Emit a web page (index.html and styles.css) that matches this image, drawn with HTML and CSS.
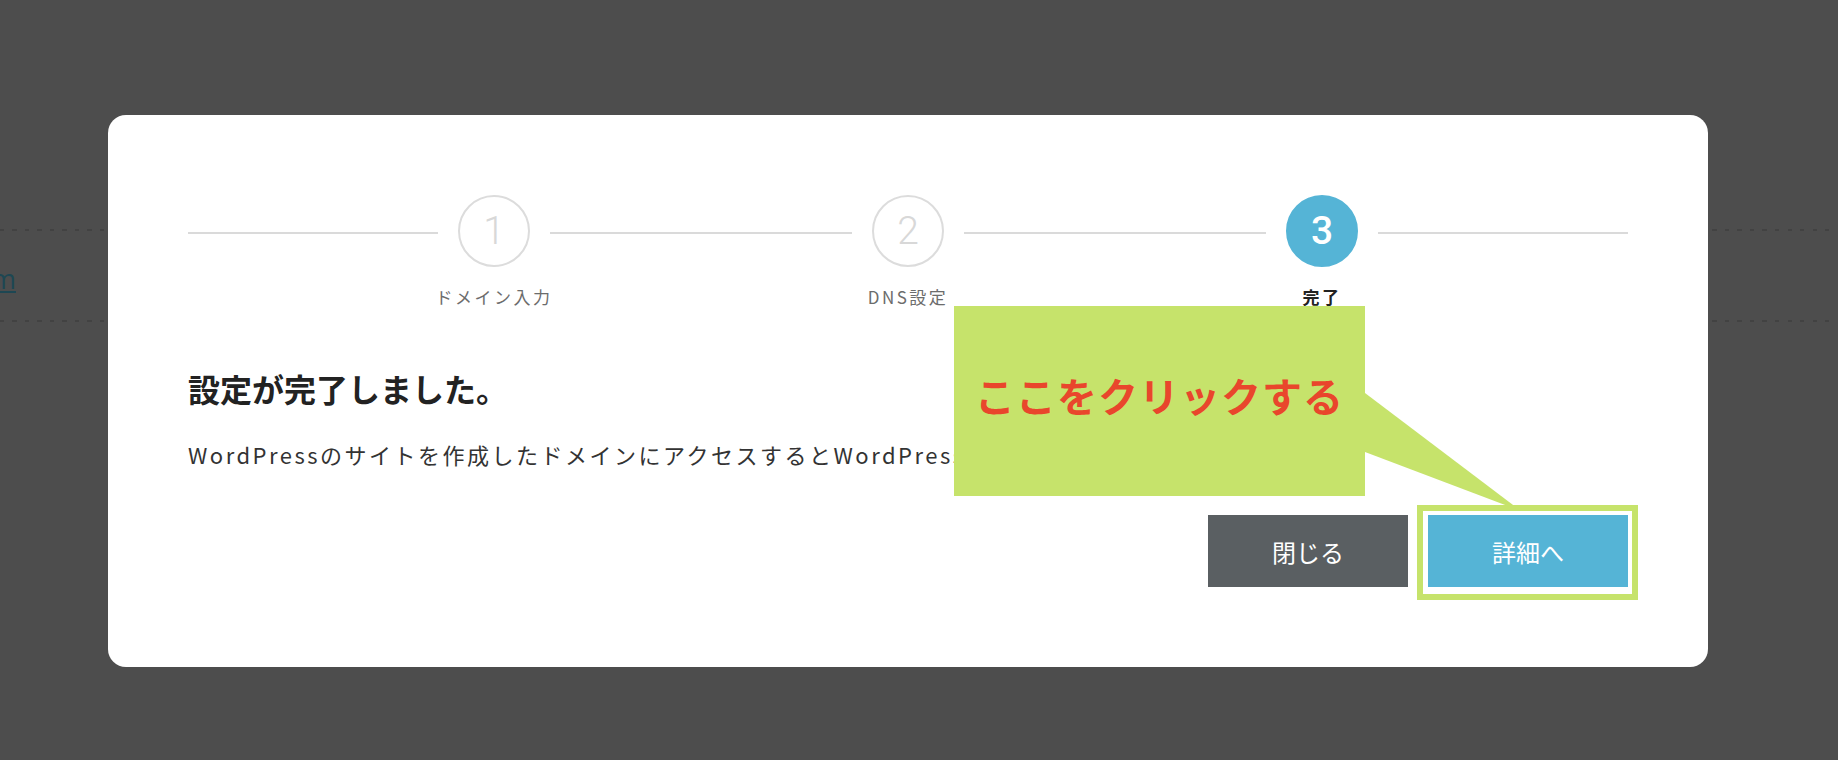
FILE: index.html
```html
<!DOCTYPE html>
<html lang="ja">
<head>
    <meta charset="UTF-8">
    <meta name="viewport" content="width=device-width, initial-scale=1.0">
    <title>ドメイン設定</title>
    <link rel="stylesheet" href="styles.css">
</head>
<body>
    <div class="page">
        <div class="page-row">
            <a class="page-link" href="#">m</a>
        </div>
    </div>

    <div class="overlay">
        <div class="modal">
            <div class="steps">
                <span class="step-line step-line-edge"></span>
                <div class="step">
                    <span class="step-num">1</span>
                    <span class="step-label">ドメイン入力</span>
                </div>
                <span class="step-line"></span>
                <div class="step">
                    <span class="step-num">2</span>
                    <span class="step-label">DNS設定</span>
                </div>
                <span class="step-line"></span>
                <div class="step is-current">
                    <span class="step-num">3</span>
                    <span class="step-label">完了</span>
                </div>
                <span class="step-line step-line-edge"></span>
            </div>

            <h2 class="modal-title">設定が完了しました。</h2>
            <p class="modal-text">WordPressのサイトを作成したドメインにアクセスするとWordPressのサイトが表示されます。</p>

            <div class="modal-buttons">
                <button class="btn btn-close" type="button">閉じる</button>
                <div class="btn-wrap">
                    <button class="btn btn-detail" type="button">詳細へ</button>
                    <span class="highlight"></span>
                </div>
            </div>

            <!-- annotation -->
            <div class="callout">ここをクリックする</div>
            <svg class="callout-tail" width="157" height="119" viewBox="0 0 157 119">
                <polygon points="0,0 156,118 0,59" fill="#c6e36b"/>
            </svg>
        </div>
    </div>
</body>
</html>
```

FILE: styles.css
```css
body {
    margin: 0;
    background: #4d4d4d;
    font-family: "Noto Sans CJK JP", "Noto Sans", sans-serif;
    color: #333;
    overflow: hidden;
}

.page {
    padding-top: 229px;
}

.page-row {
    height: 93px;
    display: flex;
    align-items: center;
    background-image:
        repeating-linear-gradient(90deg, #424242 0 4px, transparent 4px 12.5px),
        repeating-linear-gradient(90deg, #424242 0 4px, transparent 4px 12.5px);
    background-size: 100% 2px;
    background-position: top, bottom;
    background-repeat: no-repeat;
}

.page-link {
    margin: 6px 0 0 -9px;
    font-family: "Open Sans", sans-serif;
    font-size: 27px;
    color: #1d4753;
}

.overlay {
    position: fixed;
    top: 0;
    left: 0;
    right: 0;
    bottom: 0;
}

.modal {
    position: relative;
    box-sizing: border-box;
    width: 1600px;
    margin: 115px 0 0 108px;
    padding: 80px;
    background: #fff;
    border-radius: 18px;
}

/* steps */
.steps {
    display: flex;
    align-items: flex-start;
}

.step-line {
    flex: 1;
    height: 2px;
    margin-top: 37px;
    background: #dadada;
}

.step-line-edge {
    flex: 0 0 250px;
}

.step {
    width: 72px;
    margin: 0 20px;
    display: flex;
    flex-direction: column;
    align-items: center;
}

.step-num {
    box-sizing: border-box;
    width: 72px;
    height: 72px;
    border: 2px solid #dcdcdc;
    border-radius: 50%;
    display: flex;
    align-items: center;
    justify-content: center;
    font-family: Roboto, sans-serif;
    font-weight: 300;
    font-size: 39px;
    line-height: 1;
    color: #d8d8d8;
}

.step-label {
    margin-top: 18px;
    font-size: 17px;
    line-height: 24px;
    letter-spacing: 2.5px;
    color: #6c6c6c;
    white-space: nowrap;
}

.is-current .step-num {
    border-color: #55b4d6;
    background: #55b4d6;
    color: #fff;
    font-weight: 500;
}

.is-current .step-label {
    color: #222;
    font-weight: 700;
}

/* text */
.modal-title {
    margin: 58px 0 0;
    font-size: 32px;
    line-height: 42px;
    font-weight: 700;
    color: #222;
}

.modal-text {
    margin: 28px 0 0;
    font-size: 22px;
    line-height: 34px;
    letter-spacing: 2.5px;
    color: #333;
    white-space: nowrap;
}

/* buttons */
.modal-buttons {
    margin-top: 44px;
    display: flex;
    justify-content: flex-end;
    gap: 20px;
}

.btn {
    width: 200px;
    height: 72px;
    border: 0;
    padding: 0;
    font-family: inherit;
    font-size: 24px;
    color: #fff;
    cursor: pointer;
}

.btn-close {
    background: #5a5f62;
}

.btn-detail {
    background: #55b4d6;
}

.btn-wrap {
    position: relative;
    display: flex;
}

.highlight {
    position: absolute;
    top: -10px;
    left: -11px;
    right: -10px;
    bottom: -13px;
    border: 6px solid #c6e36b;
    pointer-events: none;
}

/* annotation */
.callout {
    position: absolute;
    left: 846px;
    top: 191px;
    width: 411px;
    height: 190px;
    box-sizing: border-box;
    padding-bottom: 12px;
    display: flex;
    align-items: center;
    justify-content: center;
    background: #c6e36b;
    color: #e9462c;
    font-size: 40px;
    font-weight: 700;
    letter-spacing: 1px;
}

.callout-tail {
    position: absolute;
    left: 1257px;
    top: 278px;
}
```
